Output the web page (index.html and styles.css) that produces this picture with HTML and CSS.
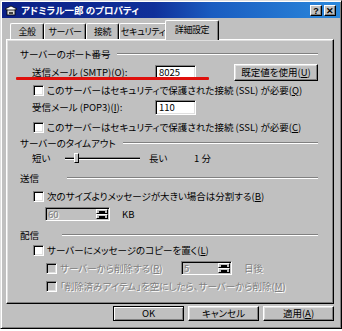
FILE: index.html
```html
<!DOCTYPE html>
<html lang="ja">
<head>
  <meta charset="UTF-8">
  <title>アドミラル一郎 のプロパティ</title>
  <link rel="stylesheet" href="styles.css">
</head>
<body>
  <div class="window">
    <div class="titlebar">
      <svg class="app-icon" width="14" height="13" viewBox="0 0 14 13">
        <path d="M1 5 L7 2 L13 5 L7 8 Z" fill="#fff" stroke="#000" stroke-width="0.8"/>
        <rect x="3" y="6" width="8" height="5" fill="#d8d8d8" stroke="#000" stroke-width="0.8"/>
        <rect x="5" y="8" width="4" height="2" fill="#404040"/>
      </svg>
      <span class="title">アドミラル一郎 のプロパティ</span>
      <span class="caption-btns">
        <span class="cbtn">?</span><span class="cbtn">✕</span>
      </span>
    </div>

    <div class="tabs">
      <span class="tab t1">全般</span>
      <span class="tab t2">サーバー</span>
      <span class="tab t3">接続</span>
      <span class="tab t4">セキュリティ</span>
      <span class="tab active">詳細設定</span>
    </div>

    <div class="panel">
      <!-- サーバーのポート番号 -->
      <div class="group-head">
        <span class="head-label w-port">サーバーのポート番号</span><span class="rule"></span>
      </div>
      <div class="row indent h18 mt2">
        <span class="lbl">送信メール (SMTP)(<u>O</u>):</span>
        <span class="field">8025</span>
        <span class="btn btn-port">既定値を使用(<u>U</u>)</span>
        <span class="redline"></span>
      </div>
      <div class="row indent h18">
        <span class="chk"></span><span>このサーバーはセキュリティで保護された接続 (SSL) が必要(<u>Q</u>)</span>
      </div>
      <div class="row indent h16">
        <span class="lbl">受信メール (POP3)(<u>I</u>):</span>
        <span class="field">110</span>
      </div>
      <div class="row indent h18 mt3">
        <span class="chk"></span><span>このサーバーはセキュリティで保護された接続 (SSL) が必要(<u>C</u>)</span>
      </div>

      <!-- サーバーのタイムアウト -->
      <div class="group-head">
        <span class="head-label w-timeout">サーバーのタイムアウト</span><span class="rule"></span>
      </div>
      <div class="row indent h16">
        <span class="slider-lbl">短い</span>
        <span class="slider"><span class="track"></span><span class="thumb"></span></span>
        <span class="slider-max">長い</span>
        <span>1 分</span>
      </div>

      <!-- 送信 -->
      <div class="group-head mt5">
        <span class="head-label w-send">送信</span><span class="rule"></span>
      </div>
      <div class="row indent h18 mt2">
        <span class="chk"></span><span>次のサイズよりメッセージが大きい場合は分割する(<u>B</u>)</span>
      </div>
      <div class="row indent2 h18">
        <span class="spin w-kb disabled"><span class="spin-val">60</span><span class="spin-btns"><i class="up"></i><i class="down"></i></span></span>
        <span class="unit">KB</span>
      </div>

      <!-- 配信 -->
      <div class="group-head mt5">
        <span class="head-label w-deliver">配信</span><span class="rule"></span>
      </div>
      <div class="row indent h16">
        <span class="chk"></span><span>サーバーにメッセージのコピーを置く(<u>L</u>)</span>
      </div>
      <div class="row indent2 h18 mt1 disabled">
        <span class="chk"></span><span class="del-lbl">サーバーから削除する(<u>R</u>)</span>
        <span class="spin w-days"><span class="spin-val">5</span><span class="spin-btns"><i class="up"></i><i class="down"></i></span></span>
        <span class="unit">日後</span>
      </div>
      <div class="row indent2 h18 disabled">
        <span class="chk"></span><span>「削除済みアイテム」を空にしたら、サーバーから削除(<u>M</u>)</span>
      </div>
    </div>

    <div class="buttons">
      <span class="btn btn-dlg default">OK</span>
      <span class="btn btn-dlg">キャンセル</span>
      <span class="btn btn-dlg">適用(<u>A</u>)</span>
    </div>
  </div>
</body>
</html>
```

FILE: styles.css
```css
html, body {
  margin: 0;
  padding: 0;
}
body {
  background: #fff;
  font-family: "Noto Sans CJK JP", "Liberation Sans", sans-serif;
  font-size: 9.5px;
  font-feature-settings: "palt";
  color: #000;
}
u {
  text-decoration: underline;
  text-underline-offset: 1px;
}

/* window frame */
.window {
  width: 342px;
  height: 329px;
  box-sizing: border-box;
  background: #c0c0c0;
  border: 1px solid;
  border-color: #dfdfdf #000 #000 #dfdfdf;
  box-shadow: inset 1px 1px #fff, inset -1px -1px #808080;
  padding: 1px;
}

/* title bar */
.titlebar {
  height: 16px;
  display: flex;
  align-items: center;
  background: linear-gradient(90deg, #0a1f86 0%, #10309a 45%, #1a5cc0 62%, #2a88dc 100%);
  color: #fff;
  padding: 0 4px 0 2px;
}
.app-icon {
  display: block;
  margin-right: 3px;
}
.title {
  font-weight: bold;
  font-size: 9.5px;
  flex: 1;
}
.caption-btns {
  display: flex;
  gap: 2px;
}
.cbtn {
  width: 12px;
  height: 11px;
  box-sizing: border-box;
  background: #c0c0c0;
  color: #000;
  font-family: "Liberation Sans", sans-serif;
  font-weight: bold;
  font-size: 9px;
  line-height: 10px;
  text-align: center;
  border: 1px solid;
  border-color: #fff #000 #000 #fff;
  box-shadow: inset -1px -1px #808080;
}

/* tabs */
.tabs {
  height: 21px;
  display: flex;
  align-items: flex-end;
  padding-left: 8px;
}
.tab {
  height: 16px;
  box-sizing: border-box;
  border: 1px solid;
  border-color: #fff #000 transparent #fff;
  border-bottom: none;
  border-radius: 2px 2px 0 0;
  box-shadow: inset -1px 0 #808080;
  font-size: 9px;
  line-height: 15px;
  text-align: center;
  white-space: nowrap;
  letter-spacing: -0.4px;
}
.t1 { width: 34px; }
.t2 { width: 42px; }
.t3 { width: 33px; }
.t4 { width: 48px; }
.tab.active {
  width: 54px;
  height: 20px;
  margin: 0 -2px -1px -2px;
  position: relative;
  z-index: 1;
  background: #c0c0c0;
  line-height: 18px;
}

/* panel */
.panel {
  margin-left: 4px;
  width: 328px;
  height: 265px;
  box-sizing: border-box;
  border: 1px solid;
  border-color: #fff #000 #000 #fff;
  box-shadow: inset -1px -1px #808080, inset 1px 1px #dfdfdf;
  padding: 7px 15px 0 13px;
}

.group-head {
  height: 14px;
  display: flex;
  align-items: center;
  white-space: nowrap;
}
.head-label {
  flex: none;
}
.w-port { width: 97px; }
.w-timeout { width: 103px; }
.w-send { width: 47px; }
.w-deliver { width: 42px; }
.rule {
  flex: 1;
  border-top: 1px solid #808080;
  border-bottom: 1px solid #fff;
}

.row {
  display: flex;
  align-items: center;
  position: relative;
  white-space: nowrap;
}
.indent { padding-left: 12px; }
.indent2 { padding-left: 25px; }
.h16 { height: 16px; }
.h18 { height: 18px; }
.mt1 { margin-top: 1px; }
.mt2 { margin-top: 2px; }
.mt3 { margin-top: 3px; }
.mt5 { margin-top: 5px; }

.lbl {
  width: 123px;
}
.field {
  width: 41px;
  height: 15px;
  box-sizing: border-box;
  background: #fff;
  border: 1px solid;
  border-color: #808080 #fff #fff #808080;
  box-shadow: inset 1px 1px #000, inset -1px -1px #dfdfdf;
  padding: 0 3px;
  line-height: 13px;
}

/* annotation */
.redline {
  position: absolute;
  left: -4px;
  top: 14px;
  width: 193px;
  height: 3px;
  background: #e0100c;
  border-radius: 1px;
}

/* push buttons */
.btn {
  box-sizing: border-box;
  background: #c0c0c0;
  border: 1px solid;
  border-color: #fff #000 #000 #fff;
  box-shadow: inset -1px -1px #808080, inset 1px 1px #dfdfdf;
  text-align: center;
  white-space: nowrap;
}
.btn-port {
  margin-left: 38px;
  width: 84px;
  height: 17px;
  line-height: 15px;
}

/* checkboxes */
.chk {
  flex: none;
  width: 11px;
  height: 11px;
  box-sizing: border-box;
  margin: 0 3px 0 1px;
  background: #fff;
  border: 1px solid;
  border-color: #808080 #fff #fff #808080;
  box-shadow: inset 1px 1px #000, inset -1px -1px #dfdfdf;
}
.disabled {
  color: #808080;
  text-shadow: 1px 1px 0 #fff;
}
.disabled .chk {
  background: #c0c0c0;
}

/* slider */
.slider-lbl {
  width: 33px;
}
.slider {
  width: 75px;
  height: 12px;
  position: relative;
  display: flex;
  align-items: center;
}
.track {
  width: 100%;
  height: 3px;
  box-sizing: border-box;
  border-top: 1px solid #808080;
  border-bottom: 1px solid #fff;
  background: #000;
  background-clip: content-box;
}
.thumb {
  position: absolute;
  left: 9px;
  top: 1px;
  width: 5px;
  height: 10px;
  box-sizing: border-box;
  background: #c0c0c0;
  border: 1px solid;
  border-color: #fff #000 #000 #fff;
}
.slider-max {
  margin-left: 9px;
  width: 45px;
}

/* spinners */
.spin {
  flex: none;
  height: 14px;
  box-sizing: border-box;
  display: flex;
  border: 1px solid;
  border-color: #808080 #fff #fff #808080;
  box-shadow: inset 1px 1px #000;
  background: #c0c0c0;
}
.w-kb { width: 65px; }
.w-days { width: 51px; }
.spin-val {
  flex: 1;
  padding-left: 2px;
  line-height: 12px;
}
.spin-btns {
  width: 12px;
  display: flex;
  flex-direction: column;
  margin: 1px 1px 1px 0;
}
.spin-btns i {
  flex: 1;
  display: flex;
  align-items: center;
  justify-content: center;
  background: #c0c0c0;
  border: 1px solid;
  border-color: #fff #000 #000 #fff;
}
.spin-btns i::after {
  content: "";
  width: 6px;
  height: 2px;
  background: #000;
}
.unit {
  margin-left: 12px;
}
.del-lbl {
  width: 121px;
}

/* dialog buttons */
.buttons {
  display: flex;
  justify-content: flex-end;
  gap: 4px;
  margin-top: 2px;
  padding-right: 6px;
}
.btn-dlg {
  width: 71px;
  height: 15px;
  line-height: 13px;
}
.btn-dlg.default {
  border-color: #000;
  box-shadow: inset 1px 1px #fff, inset -1px -1px #808080;
}
```
